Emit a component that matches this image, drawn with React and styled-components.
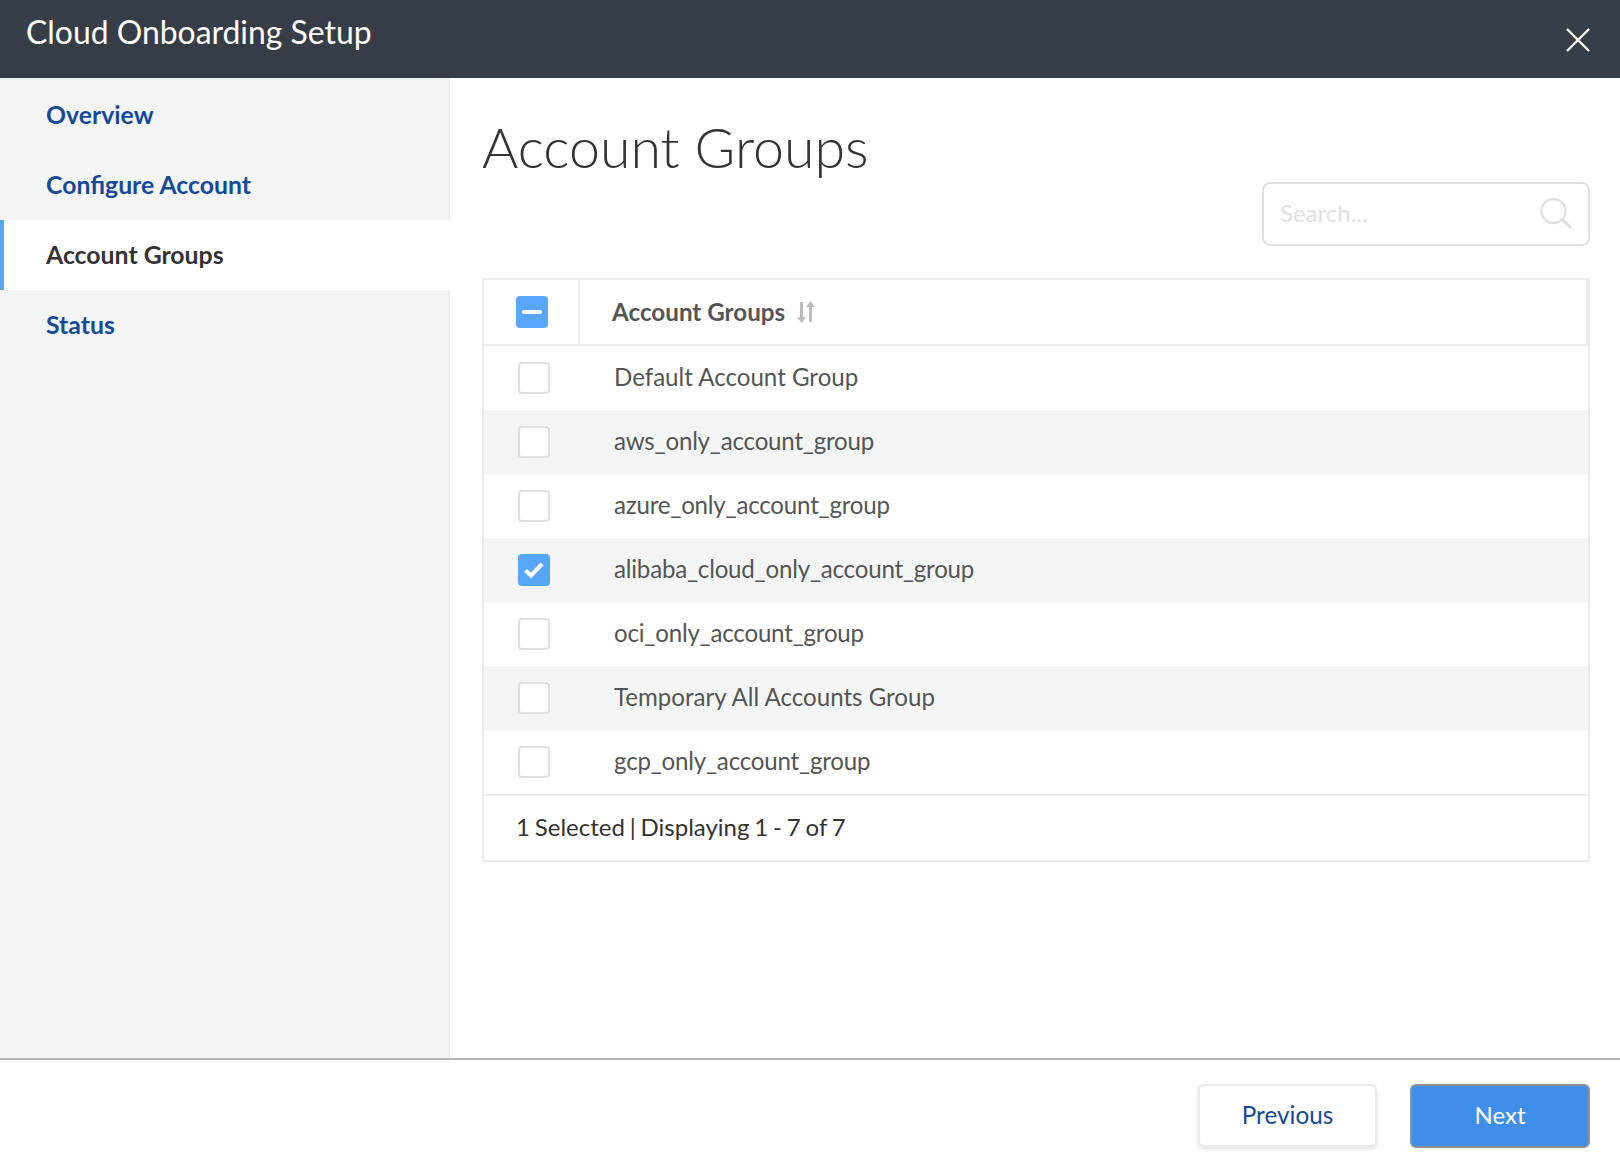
import React from 'react';
import styled, { createGlobalStyle } from 'styled-components';

const groups = [
	{ name: 'Default Account Group' },
	{ name: 'aws_only_account_group', snake: true },
	{ name: 'azure_only_account_group', snake: true },
	{ name: 'alibaba_cloud_only_account_group', snake: true, checked: true },
	{ name: 'oci_only_account_group', snake: true },
	{ name: 'Temporary All Accounts Group' },
	{ name: 'gcp_only_account_group', snake: true },
];

const steps = [
	{ label: 'Overview' },
	{ label: 'Configure Account' },
	{ label: 'Account Groups', active: true },
	{ label: 'Status' },
];

const App = () => {
	return (
		<Page>
			<GlobalStyle />
			<Header>
				<HeaderTitle>Cloud Onboarding Setup</HeaderTitle>
				<CloseIcon width='24' height='24' viewBox='0 0 24 24'>
					<path d='M1 1L23 23M23 1L1 23' stroke='#fff' strokeWidth='2.3' fill='none' />
				</CloseIcon>
			</Header>
			<Body>
				<Sidebar>
					{steps.map((step) => (
						<NavItem key={step.label} $active={step.active}>
							{step.label}
						</NavItem>
					))}
				</Sidebar>
				<Main>
					<Title>Account Groups</Title>
					<SearchRow>
						<SearchBox>
							<SearchText>Search...</SearchText>
							<svg width='34' height='34' viewBox='0 0 34 34' fill='none' stroke='#dfe1e1'>
								<circle cx='14.5' cy='14' r='12' strokeWidth='2.4' />
								<path d='M23.5 22.5L32 31' strokeWidth='3.4' />
							</svg>
						</SearchBox>
					</SearchRow>
					<Table>
						<HeadRow>
							<HeadCheckCell>
								<Check $on>
									<MinusBar />
								</Check>
							</HeadCheckCell>
							<HeadLabel>
								<HeadText>Account Groups</HeadText>
								<svg width='20' height='24' viewBox='0 0 20 24' fill='#b9bbbb'>
									<path d='M4 2h3v15h3l-4.500 6L1 17h3z' />
									<path d='M13 22h3V7h3l-4.500-6L10 7h3z' />
								</svg>
							</HeadLabel>
						</HeadRow>
						{groups.map((group, i) => (
							<Row key={group.name} $striped={i % 2 === 1}>
								<CheckCell>
									<Check $on={group.checked}>
										{group.checked && (
											<svg width='22' height='18' viewBox='0 0 22 18' fill='none'>
												<path d='M2.500 9.500L8 14.500L19 3' stroke='#fff' strokeWidth='4' />
											</svg>
										)}
									</Check>
								</CheckCell>
								<RowLabel $snake={group.snake}>{group.name}</RowLabel>
							</Row>
						))}
						<TableFooter>1 Selected | Displaying 1 - 7 of 7</TableFooter>
					</Table>
				</Main>
			</Body>
			<Footer>
				<SecondaryButton>Previous</SecondaryButton>
				<PrimaryButton>Next</PrimaryButton>
			</Footer>
		</Page>
	);
};

const GlobalStyle = createGlobalStyle`
	* {
		box-sizing: border-box;
	}

	body {
		margin: 0;
		background: #fff;
		font-family: Lato, 'Open Sans', sans-serif;
	}
`;

const Page = styled.div`
	display: flex;
	flex-direction: column;
	width: 1620px;
	height: 1168px;
	overflow: hidden;
`;

const Header = styled.header`
	display: flex;
	justify-content: space-between;
	flex: 0 0 78px;
	padding: 0 30px 0 26px;
	background: #373d47;
`;

const HeaderTitle = styled.h1`
	margin: 11px 0 0;
	font-size: 31.9px;
	line-height: 42px;
	font-weight: 400;
	color: #fff;
`;

const CloseIcon = styled.svg`
	margin-top: 28px;
`;

const Body = styled.div`
	display: flex;
	flex: 1;
	min-height: 0;
`;

const Sidebar = styled.nav`
	display: flex;
	flex-direction: column;
	flex: 0 0 450px;
	background: #f4f6f5;
	border-top: 2px solid #eff1f0;
	box-shadow: inset -2px 0 0 #eeeeee;
`;

const NavItem = styled.div`
	display: flex;
	align-items: center;
	height: 70px;
	padding-left: ${(p) => (p.$active ? '42px' : '46px')};
	padding-bottom: 2px;
	font-size: 24.8px;
	font-weight: 700;
	color: ${(p) => (p.$active ? '#333333' : '#164a97')};
	background: ${(p) => (p.$active ? '#fff' : 'transparent')};
	border-left: ${(p) => (p.$active ? '4px solid #58a6fa' : 'none')};
`;

const Main = styled.main`
	flex: 1;
	padding: 0 30px 0 32px;
`;

const Title = styled.h2`
	margin: 35px 0 0;
	height: 69px;
	font-size: 55.5px;
	line-height: 68px;
	font-weight: 300;
	color: #333333;
`;

const SearchRow = styled.div`
	display: flex;
	justify-content: flex-end;
`;

const SearchBox = styled.div`
	display: flex;
	align-items: center;
	justify-content: space-between;
	width: 328px;
	height: 64px;
	padding: 0 15px 0 16px;
	border: 2px solid #dfe1e1;
	border-radius: 8px;
`;

const SearchText = styled.span`
	padding-bottom: 3px;
	font-size: 24px;
	color: #dfe1e1;
`;

const Table = styled.div`
	margin-top: 32px;
	border: 2px solid #ebebeb;
`;

const HeadRow = styled.div`
	display: flex;
	height: 66px;
	border-bottom: 2px solid #ebebeb;
	border-right: 2px solid #ebebeb;
`;

const HeadCheckCell = styled.div`
	display: flex;
	align-items: center;
	flex: 0 0 96px;
	padding-left: 32px;
	border-right: 2px solid #ebebeb;
`;

const HeadLabel = styled.div`
	display: flex;
	align-items: center;
	gap: 11px;
	padding-left: 32px;
`;

const HeadText = styled.span`
	padding-bottom: 2px;
	font-size: 24.2px;
	font-weight: 700;
	color: #555555;
`;

const Row = styled.div`
	display: flex;
	align-items: center;
	height: 64px;
	background: ${(p) => (p.$striped ? '#f4f6f5' : '#fff')};
`;

const CheckCell = styled.div`
	flex: 0 0 130px;
	padding-left: 34px;
`;

const Check = styled.div`
	display: flex;
	align-items: center;
	justify-content: center;
	width: 32px;
	height: 32px;
	border-radius: 4px;
	background: ${(p) => (p.$on ? '#58a6fa' : '#fff')};
	border: ${(p) => (p.$on ? 'none' : '2px solid #dfe1e1')};
`;

const MinusBar = styled.div`
	width: 20px;
	height: 4px;
	border-radius: 2px;
	background: #fff;
`;

const RowLabel = styled.div`
	padding-bottom: 4px;
	font-size: 24.1px;
	letter-spacing: ${(p) => (p.$snake ? '-0.2px' : '0')};
	color: #555555;
`;

const TableFooter = styled.div`
	display: flex;
	align-items: center;
	height: 66px;
	padding: 0 0 4px 32px;
	border-top: 2px solid #ebebeb;
	font-size: 24px;
	word-spacing: -1.3px;
	color: #333333;
`;

const Footer = styled.footer`
	display: flex;
	justify-content: flex-end;
	gap: 33px;
	flex: 0 0 110px;
	padding: 24px 30px 0 0;
	border-top: 2px solid #b5b5b5;
`;

const SecondaryButton = styled.button`
	width: 179px;
	height: 63px;
	padding-bottom: 3px;
	font-family: inherit;
	font-size: 24.3px;
	color: #164a97;
	background: #fff;
	border: 2px solid #ebebeb;
	border-radius: 6px;
	box-shadow: 0 2px 4px rgba(0, 0, 0, 0.12);
`;

const PrimaryButton = styled.button`
	width: 180px;
	height: 64px;
	padding-bottom: 5px;
	font-family: inherit;
	font-size: 24px;
	color: #fff;
	background: #3f8eea;
	border: 2px solid #8e9194;
	border-radius: 6px;
`;

export default App;
